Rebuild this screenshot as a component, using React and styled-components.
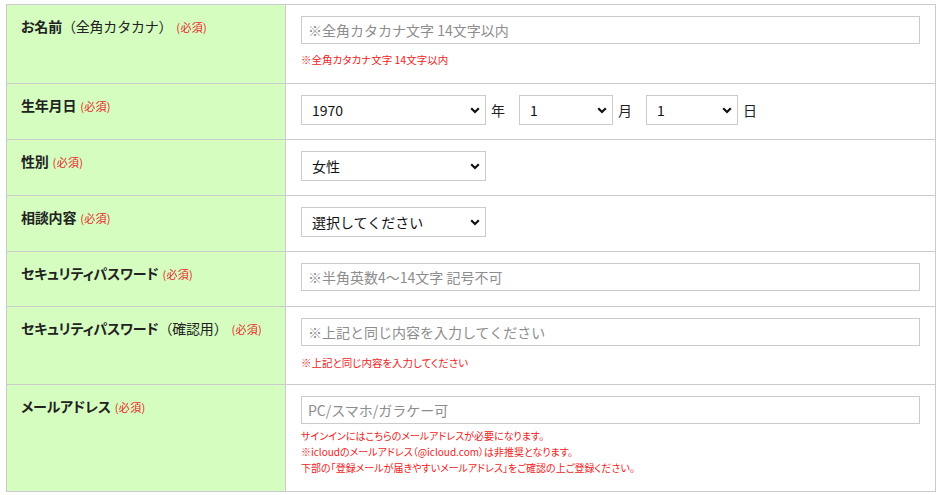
import styled, { createGlobalStyle } from 'styled-components';

const GlobalStyle = createGlobalStyle`
  body {
    margin: 0;
    background: #fff;
    font-family: "Noto Sans CJK JP", "Noto Sans", sans-serif;
    color: #222;
  }
`;

const Wrapper = styled.div`
  padding: 4px 6px;
`;

const FormTable = styled.table`
  width: 930px;
  table-layout: fixed;
  border-collapse: collapse;
  border: 1px solid #cbcbcb;
`;

const Row = styled.tr`
  border-bottom: 1px solid #cbcbcb;
`;

const Label = styled.th`
  width: 250px;
  background: #d6fdc0;
  border-right: 1px solid #cbcbcb;
  padding: 11px 14px;
  text-align: left;
  vertical-align: top;
  font-size: 14px;
  line-height: 20px;
  font-weight: bold;
  color: #222;
  font-feature-settings: "palt";
  letter-spacing: -0.2px;
`;

const Sub = styled.span`
  font-weight: normal;
  font-feature-settings: normal;
`;

const Required = styled.span`
  font-size: 11px;
  font-weight: normal;
  color: #e8252b;
  margin-left: 4px;
  letter-spacing: 0.3px;
`;

const Value = styled.td`
  padding: 11px 15px ${(p) => p.$bottom ?? 14}px;
  vertical-align: top;
`;

const TextInput = styled.input`
  box-sizing: border-box;
  display: block;
  width: 100%;
  height: 28px;
  border: 1px solid #cbcbcb;
  padding: 0 6px;
  font-family: inherit;
  font-size: 14px;
  color: #222;
  outline: none;
  &::placeholder {
    color: #8d8d8d;
  }
`;

const Note = styled.p`
  margin: ${(p) => p.$gap}px 0 0;
  font-size: ${(p) => p.$size}px;
  line-height: ${(p) => p.$lh}px;
  color: #f01c1c;
  font-feature-settings: "palt";
`;

const SelectBox = styled.div`
  position: relative;
  width: ${(p) => p.$w}px;
  height: 30px;
  flex: none;
`;

const Select = styled.select`
  box-sizing: border-box;
  appearance: none;
  width: 100%;
  height: 100%;
  border: 1px solid #cbcbcb;
  border-radius: 0;
  background: #fff;
  padding: 0 24px 0 10px;
  font-family: inherit;
  font-size: 14px;
  color: #111;
  outline: none;
`;

const Chevron = styled.svg`
  position: absolute;
  right: 6px;
  top: 12px;
  pointer-events: none;
`;

const DateRow = styled.div`
  display: flex;
  align-items: center;
`;

const Unit = styled.span`
  font-size: 14px;
  color: #222;
  margin: 0 ${(p) => p.$after}px 0 5px;
`;

const Dropdown = ({ w, value, options }) => (
  <SelectBox $w={w}>
    <Select defaultValue={value}>
      {options.map((o) => (
        <option key={o}>{o}</option>
      ))}
    </Select>
    <Chevron width="10" height="7" viewBox="0 0 10 7">
      <path d="M1.2 1.2 L5 5 L8.8 1.2" fill="none" stroke="#111" strokeWidth="2.2" />
    </Chevron>
  </SelectBox>
);

const years = Array.from({ length: 60 }, (_, i) => String(1950 + i));
const months = Array.from({ length: 12 }, (_, i) => String(i + 1));
const days = Array.from({ length: 31 }, (_, i) => String(i + 1));

const App = () => {
  return (
    <Wrapper>
      <GlobalStyle />
      <FormTable>
        <tbody>
          <Row>
            <Label>
              お名前<Sub>（全角カタカナ）</Sub>
              <Required>(必須)</Required>
            </Label>
            <Value $bottom={15}>
              <TextInput type="text" placeholder="※全角カタカナ文字 14文字以内" />
              <Note $gap={8} $lh={16} $size={10.5}>※全角カタカナ文字 14文字以内</Note>
            </Value>
          </Row>
          <Row>
            <Label>
              生年月日<Required>(必須)</Required>
            </Label>
            <Value>
              <DateRow>
                <Dropdown w={185} value="1970" options={years} />
                <Unit $after={14}>年</Unit>
                <Dropdown w={94} value="1" options={months} />
                <Unit $after={14}>月</Unit>
                <Dropdown w={92} value="1" options={days} />
                <Unit $after={0}>日</Unit>
              </DateRow>
            </Value>
          </Row>
          <Row>
            <Label>
              性別<Required>(必須)</Required>
            </Label>
            <Value>
              <Dropdown w={185} value="女性" options={['男性', '女性']} />
            </Value>
          </Row>
          <Row>
            <Label>
              相談内容<Required>(必須)</Required>
            </Label>
            <Value>
              <Dropdown w={185} value="選択してください" options={['選択してください', '恋愛', '仕事', '人間関係']} />
            </Value>
          </Row>
          <Row>
            <Label>
              セキュリティパスワード<Required>(必須)</Required>
            </Label>
            <Value $bottom={15}>
              <TextInput type="password" placeholder="※半角英数4～14文字 記号不可" />
            </Value>
          </Row>
          <Row>
            <Label>
              セキュリティパスワード<Sub>（確認用）</Sub>
              <Required>(必須)</Required>
            </Label>
            <Value $bottom={13}>
              <TextInput type="password" placeholder="※上記と同じ内容を入力してください" />
              <Note $gap={9} $lh={16} $size={10.5}>※上記と同じ内容を入力してください</Note>
            </Value>
          </Row>
          <Row>
            <Label>
              メールアドレス<Required>(必須)</Required>
            </Label>
            <Value $bottom={15}>
              <TextInput type="email" placeholder="PC/スマホ/ガラケー可" />
              <Note $gap={4} $lh={16} $size={10}>
                サインインにはこちらのメールアドレスが必要になります。
                <br />
                ※icloudのメールアドレス（@icloud.com）は非推奨となります。
                <br />
                下部の「登録メールが届きやすいメールアドレス」をご確認の上ご登録ください。
              </Note>
            </Value>
          </Row>
        </tbody>
      </FormTable>
    </Wrapper>
  );
};

export default App;
